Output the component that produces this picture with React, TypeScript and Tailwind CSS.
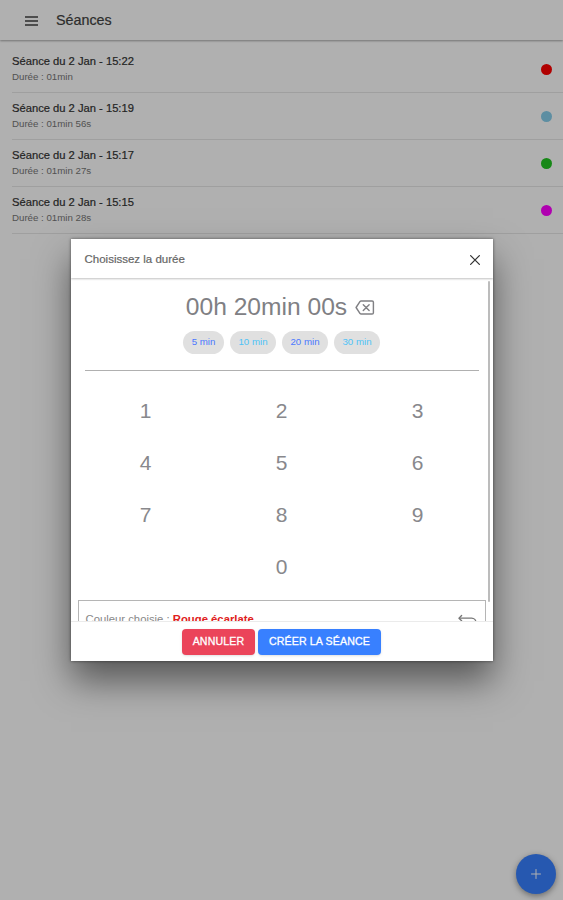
import React from 'react';
import { IoAdd, IoBackspaceOutline, IoCloseOutline, IoReturnUpBackOutline } from 'react-icons/io5';

const sessions = [
  { title: 'Séance du 2 Jan - 15:22', duration: '01min', color: 'bg-[#ff0000]' },
  { title: 'Séance du 2 Jan - 15:19', duration: '01min 56s', color: 'bg-[#87ceeb]' },
  { title: 'Séance du 2 Jan - 15:17', duration: '01min 27s', color: 'bg-[#22c522]' },
  { title: 'Séance du 2 Jan - 15:15', duration: '01min 28s', color: 'bg-[#ff00ff]' },
];

const presets = [
  { label: '5 min', style: 'w-[41px] text-[#4a78ff]' },
  { label: '10 min', style: 'w-[46px] text-[#4fc3f7]' },
  { label: '20 min', style: 'w-[46px] text-[#4a78ff]' },
  { label: '30 min', style: 'w-[46px] text-[#4fc3f7]' },
];

const keys = ['1', '2', '3', '4', '5', '6', '7', '8', '9', '', '0', ''];

const SessionList: React.FC = () => (
  <div className="h-[900px] bg-white">
    <header className="flex h-10 items-center pl-[25px] shadow-[0_1px_2px_rgba(0,0,0,0.35)]">
      <svg className="mt-px h-[10px] w-[13px] text-[#707070]" viewBox="0 0 13 10" fill="currentColor">
        <rect y="0" width="13" height="2" />
        <rect y="4" width="13" height="2" />
        <rect y="8" width="13" height="2" />
      </svg>
      <h1 className="mt-[2px] ml-[18px] text-[14.3px] text-[#424242] [-webkit-text-stroke:0.2px]">Séances</h1>
    </header>

    <ul className="pt-[6px] pl-3">
      {sessions.map((session) => (
        <li key={session.title} className="flex h-[47px] items-center justify-between border-b border-[#e6e6e6] pr-[11px]">
          <div className="pb-px">
            <h2 className="text-[11.2px] leading-[15px] text-[#333] [-webkit-text-stroke:0.2px]">{session.title}</h2>
            <p className="text-[9.7px] leading-[15px] text-[#777]">Durée : {session.duration}</p>
          </div>
          <span className={`h-[11px] w-[11px] rounded-full ${session.color}`} />
        </li>
      ))}
    </ul>
  </div>
);

const DurationModal: React.FC = () => (
  <div className="flex h-[422px] w-[422px] flex-col overflow-hidden bg-white shadow-[0_20px_34px_rgba(0,0,0,0.5),0_0_3px_rgba(0,0,0,0.5)]">
    <header className="flex h-[39px] shrink-0 items-center justify-between pr-[8px] pl-[14px] shadow-[0_1px_2px_rgba(0,0,0,0.25)]">
      <h2 className="mt-[2px] text-[11.5px] text-[#666] [-webkit-text-stroke:0.2px]">Choisissez la durée</h2>
      <IoCloseOutline className="mt-[2px] h-5 w-5 text-[#333]" />
    </header>

    <div className="relative flex-1 overflow-hidden">
      <div className="mx-[14px] flex h-[93px] flex-col items-center border-b border-[#b0b0b0] pt-[14px]">
        <div className="flex h-[30px] items-center gap-[7px] text-[#808084]">
          <span className="text-[24.6px] leading-none">00h 20min 00s</span>
          <IoBackspaceOutline className="h-[23px] w-[23px]" />
        </div>
        <div className="mt-[9px] flex gap-[6px]">
          {presets.map((preset) => (
            <button key={preset.label} className={`h-[23px] rounded-full bg-[#e0e0e0] text-[9.7px] ${preset.style}`}>
              {preset.label}
            </button>
          ))}
        </div>
      </div>

      <div className="mx-[7px] grid grid-cols-3 pt-[14px]">
        {keys.map((key, i) => (
          <button key={i} className="h-[52px] text-[21px] text-[#88888c]">
            {key}
          </button>
        ))}
      </div>

      <div className="mx-[7px] mt-[7px] flex h-[39px] items-center justify-between border border-[#b5b5b5] px-[7px]">
        <p className="text-[11.3px] text-[#888]">
          Couleur choisie : <strong className="text-[#e02020]">Rouge écarlate</strong>
        </p>
        <IoReturnUpBackOutline className="h-[21px] w-[21px] text-[#777]" />
      </div>

      {/* Scrollbar */}
      <div className="absolute top-[3px] right-[3px] h-[321px] w-[2px] rounded bg-[#bcbcbc]" />
    </div>

    <footer className="flex h-10 shrink-0 items-center justify-center gap-[3px] border-t border-[#ebebeb] text-[10.6px] tracking-[0.15px] text-white [-webkit-text-stroke:0.3px]">
      <button className="h-[26px] w-[73px] rounded-sm bg-[#eb445a] shadow-sm">ANNULER</button>
      <button className="h-[26px] w-[123px] rounded-sm bg-[#3880ff] shadow-sm">CRÉER LA SÉANCE</button>
    </footer>
  </div>
);

const App: React.FC = () => (
  <main className="relative h-[900px] w-[563px] overflow-hidden font-['Liberation_Sans',Arial,sans-serif]">
    <SessionList />
    <button className="absolute right-[7px] bottom-[6px] flex h-10 w-10 items-center justify-center rounded-full bg-[#3880ff] text-white shadow-[0_2px_6px_rgba(0,0,0,0.4)]">
      <IoAdd className="h-4 w-4" />
    </button>
    <div className="absolute inset-0 flex items-center justify-center bg-black/31">
      <DurationModal />
    </div>
  </main>
);

export default App;
